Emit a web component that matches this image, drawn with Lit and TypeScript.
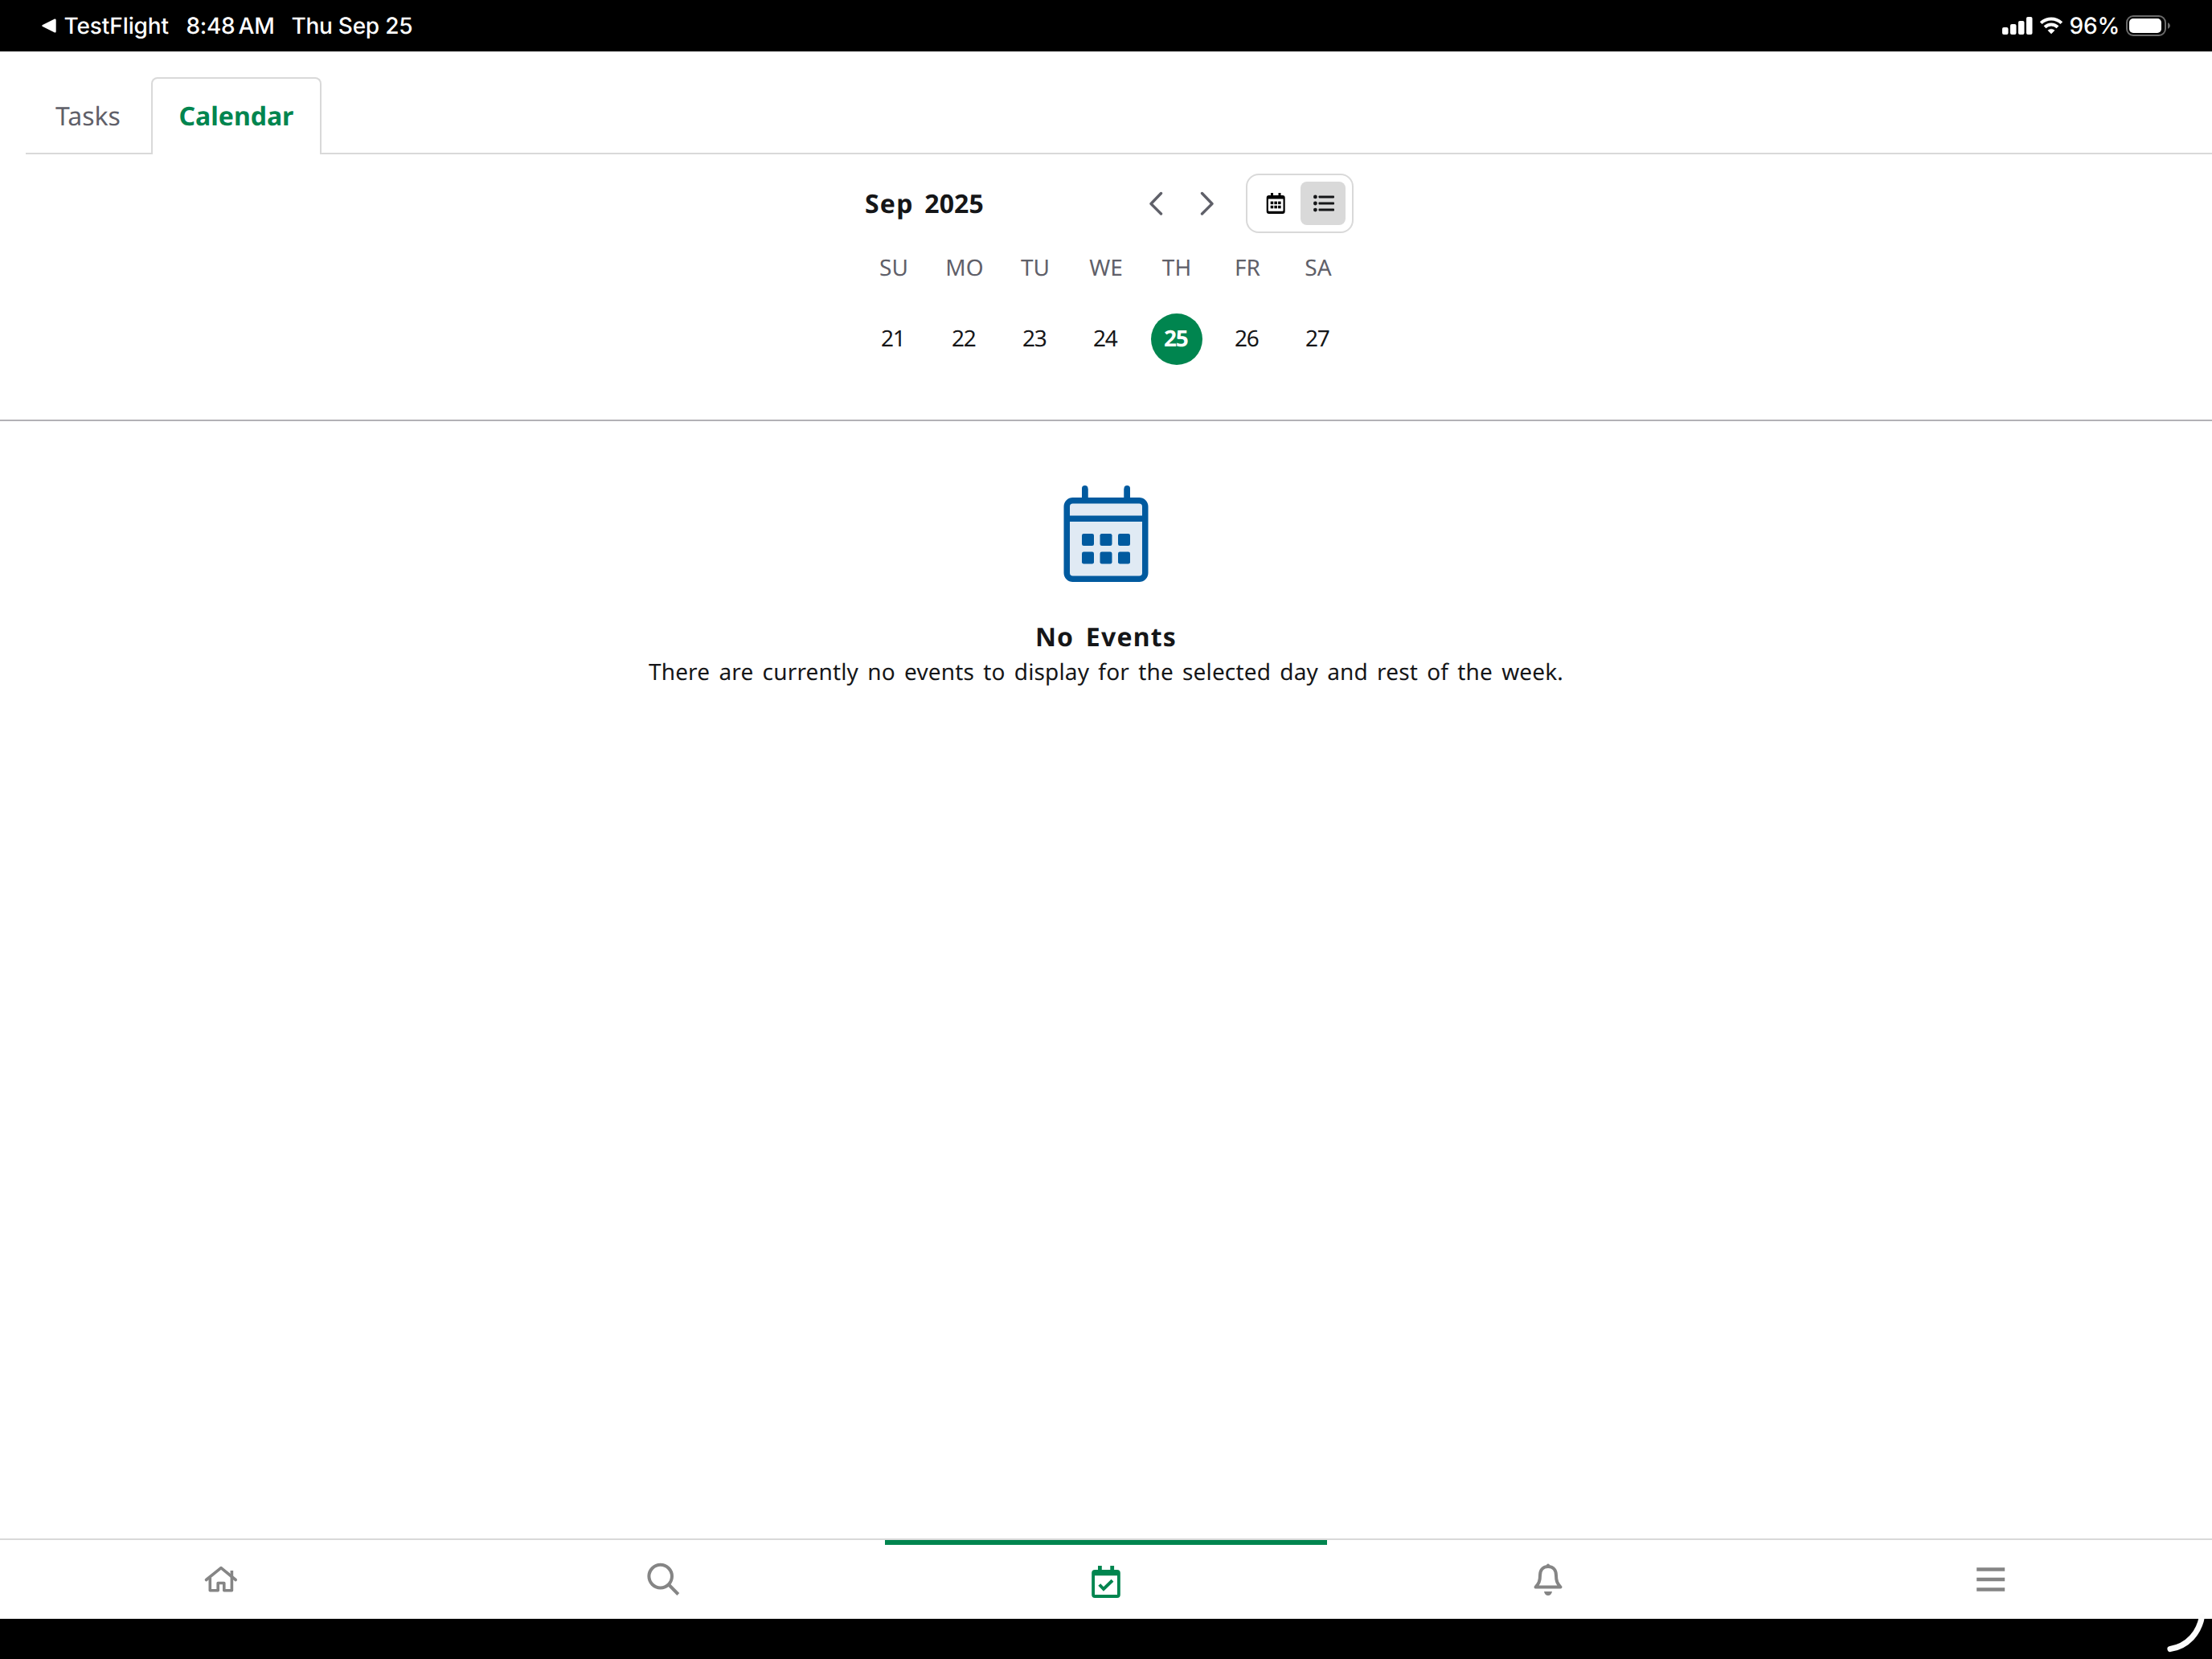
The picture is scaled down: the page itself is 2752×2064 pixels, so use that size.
import { LitElement, html, css, svg } from "lit";
import { customElement, property } from "lit/decorators.js";
import { classMap } from "lit/directives/class-map.js";

const NAV = ["home", "search", "calendar", "bell", "menu"];
const WEEK: [string, number][] = [["SU", 21], ["MO", 22], ["TU", 23], ["WE", 24], ["TH", 25], ["FR", 26], ["SA", 27]];

@customElement("status-bar")
class StatusBar extends LitElement {
  static styles = css`
    :host { display: flex; justify-content: space-between; height: 64px; background: #000; color: #fff;
      font: 500 28px/64px Inter, "Liberation Sans", sans-serif; box-sizing: border-box; padding: 0 51px 0 52px; white-space: pre; }
    .side { display: flex; align-items: center; }
    .back { width: 18px; height: 18px; margin-right: 9.500px; }
    .app { letter-spacing: -0.1px; }
    .time { margin-left: 21.500px; letter-spacing: -0.3px; word-spacing: -3px; }
    .date { margin-left: 21px; letter-spacing: -0.25px; }
    .signal { width: 38px; height: 22px; margin-right: 8px; }
    .wifi { width: 30px; height: 22px; margin-right: 8px; }
    .pct { letter-spacing: -0.2px; }
    .battery { width: 56px; height: 26px; margin-left: 8px; }
  `;
  render() {
    return html`
      <div class="side">
        <svg class="back" viewBox="0 0 18 18"><path d="M1 8 16 .5Q17.700 0 17.700 2V16Q17.700 18 16 17.500L1 10Q-.6 9 1 8Z" fill="#fff"/></svg>
        <span class="app">TestFlight</span><span class="time">8:48 AM</span><span class="date">Thu Sep 25</span>
      </div>
      <div class="side">
        <svg class="signal" viewBox="0 0 38 22" fill="#fff"><rect y="13" width="7.500" height="9" rx="2"/><rect x="10" y="9" width="7.500" height="13" rx="2"/><rect x="20" y="5" width="7.500" height="17" rx="2"/><rect x="30" width="7.500" height="22" rx="2"/></svg>
        <svg class="wifi" viewBox="0 0 30 22"><path d="M2.200 7.600A18.500 18.500 0 0 1 27.800 7.600" fill="none" stroke="#fff" stroke-width="4"/><path d="M7 12.700A11.500 11.500 0 0 1 23 12.700" fill="none" stroke="#fff" stroke-width="4"/><path d="M10.800 16.800Q15 13.600 19.200 16.800L15 21Z" fill="#fff" stroke="#fff" stroke-width=".5"/></svg>
        <span class="pct">96%</span>
        <svg class="battery" viewBox="0 0 56 26"><rect x="1" y="1" width="48" height="24" rx="8" fill="none" stroke="#6b6b6b" stroke-width="2"/><rect x="4" y="4" width="40" height="18" rx="5" fill="#fff"/><path d="M52 9Q55 10.500 55 13T52 17Z" fill="#6b6b6b"/></svg>
      </div>`;
  }
}

@customElement("tab-strip")
class TabStrip extends LitElement {
  static styles = css`
    :host { display: flex; align-items: flex-end; padding: 32px 0 0 32px; height: 128px; box-sizing: border-box; font-size: 32px; line-height: 98px; }
    .tab, .rest { box-sizing: border-box; height: 96px; border-bottom: 2px solid #d9d9d9; }
    .tab { width: 156px; padding-left: 37px; color: #5f6069; }
    .tab.active { width: 212px; padding: 0; text-align: center; border: 2px solid #d9d9d9; border-bottom: 0; border-radius: 8px 8px 0 0; color: #00854f; font-weight: 700; line-height: 94px; }
    .rest { flex: 1; }
  `;
  render() {
    return html`<div class="tab">Tasks</div><div class="tab active">Calendar</div><div class="rest"></div>`;
  }
}

@customElement("week-picker")
class WeekPicker extends LitElement {
  static styles = css`
    :host { display: block; border-bottom: 2px solid #b2b1b6; height: 332px; box-sizing: border-box; }
    .inner { width: 616px; margin: 0 auto; padding-top: 24px; }
    .head { display: flex; align-items: center; height: 74px; }
    .title { flex: 1; padding-left: 8px; font-size: 32px; line-height: 42px; padding-top: 1px; font-weight: 700; letter-spacing: 1.200px; word-spacing: 4.200px; white-space: nowrap; }
    .year { letter-spacing: .1px; }
    .arrow { width: 18px; height: 30px; margin-right: 46px; }
    .arrow.next { margin-right: 39px; }
    .toggle { box-sizing: border-box; width: 134px; height: 74px; border: 2px solid #d9d9d9; border-radius: 16px; display: flex; align-items: center; padding-left: 8px; }
    .opt { width: 56px; height: 54px; border-radius: 8px; display: flex; align-items: center; justify-content: center; margin-right: 2px; }
    .opt.on { background: #d9d9d9; }
    .opt svg { width: 28px; height: 28px; }
    .grid { display: grid; grid-template-columns: repeat(7, 88px); justify-items: center; font-size: 28px; }
    .dow { height: 88px; line-height: 87px; color: #5f6069; }
    .day { box-sizing: border-box; width: 64px; height: 64px; margin-top: 12px; padding-right: 2.400px; line-height: 62px; text-align: center; border-radius: 50%; letter-spacing: -1.200px; }
    .day.sel { background: #00854f; color: #fff; font-weight: 700; }
  `;
  @property({ type: Number }) selected = 25;
  render() {
    return html`<div class="inner">
      <div class="head">
        <div class="title">Sep <span class="year">2025</span></div>
        <svg class="arrow" viewBox="0 0 18 30"><path d="M15.500 2.500 3 15.500 15.500 28" fill="none" stroke="#5f6069" stroke-width="3.400" stroke-linecap="round" stroke-linejoin="round"/></svg>
        <svg class="arrow next" viewBox="0 0 18 30"><path d="M2.500 2.500 15 15.500 2.500 28" fill="none" stroke="#5f6069" stroke-width="3.400" stroke-linecap="round" stroke-linejoin="round"/></svg>
        <div class="toggle">
          <div class="opt"><svg viewBox="0 0 28 28"><path fill-rule="evenodd" d="M7 1h3v3h6.500V1h3v3h2.200q3 0 3 3v17q0 3-3 3H4.700q-3 0-3-3V7q0-3 3-3H7ZM3.900 8.400v14.400q0 1 1 1h16.600q1 0 1-1V8.400Z" fill="#000"/>${[6.7, 11.4, 16.1].map((x) => [11.6, 16.8].map((y) => svg`<rect x=${x} y=${y} width="3.500" height="3.500" fill="#000"/>`))}</svg></div>
          <div class="opt on"><svg viewBox="0 0 28 28" fill="#151618">${[5.9, 14, 22.1].map((y) => svg`<circle cx="4.400" cy=${y} r="2.400"/><rect x="8.500" y=${y - 1.5} width="19.500" height="3" rx=".8"/>`)}</svg></div>
        </div>
      </div>
      <div class="grid">
        ${WEEK.map(([n]) => html`<div class="dow">${n}</div>`)}
        ${WEEK.map(([, d]) => html`<div class=${classMap({ day: true, sel: d === this.selected })}>${d}</div>`)}
      </div>
    </div>`;
  }
}

@customElement("empty-state")
class EmptyState extends LitElement {
  static styles = css`
    :host { display: flex; flex-direction: column; align-items: center; flex: 1; padding-top: 80px; }
    .art { width: 120px; height: 120px; }
    .title { margin-top: 47px; font-size: 32px; line-height: 44px; font-weight: 700; letter-spacing: 1.200px; word-spacing: 5px; }
    .text { font-size: 28px; line-height: 42px; letter-spacing: .15px; word-spacing: 3.800px; }
  `;
  render() {
    return html`
      <svg class="art" viewBox="0 0 16 16">
        <rect x="1.500" y="2.500" width="13" height="13" rx="1" fill="#e0eaf4" stroke="#005a9f"/>
        <path d="M1.500 5.500h13M4.500 2V.5M11.500 2V.5" stroke="#005a9f"/>
        <path d="M4.500 2V.5M11.500 2V.5" stroke="#005a9f" stroke-linecap="round"/>
        ${[4, 7, 10].map((x) => [8, 11].map((y) => svg`<rect x=${x} y=${y} width="2" height="2" rx=".3" fill="#005a9f"/>`))}
      </svg>
      <div class="title">No Events</div>
      <div class="text">There are currently no events to display for the selected day and rest of the week.</div>`;
  }
}

@customElement("nav-bar")
class NavBar extends LitElement {
  static styles = css`
    :host { display: grid; grid-template-columns: repeat(5, 1fr); height: 100px; box-sizing: border-box; border-top: 2px solid #d9d9d9; }
    .item { display: flex; justify-content: center; box-sizing: border-box; padding-top: 28px; }
    .item.active { border-top: 6px solid #00854f; padding-top: 26px; }
    svg { width: 40px; height: 40px; fill: none; stroke: #858585; stroke-width: 4; }
  `;
  icon(name: string) {
    switch (name) {
      case "home": return svg`<path d="M1.600 21.500 20 6.700 38.200 21.500" stroke-width="3.600" stroke-linecap="round" stroke-linejoin="round"/><path d="M6.300 19V34.700H16.200V25.500H23.800V34.700H33.400V10" stroke-width="3.600" stroke-linejoin="round"/>`;
      case "search": return svg`<circle cx="15.700" cy="17.100" r="14.300"/><path d="M26 27.500 37.800 39.500"/>`;
      case "calendar": return svg`<path fill="#00854f" stroke="none" fill-rule="evenodd" d="M10 0h4.800v5h10.500V0h4.800v5h3.700q4 0 4 4v27q0 4-4 4H6.200q-4 0-4-4V9q0-4 4-4H10ZM6 12.300V36H34V12.300Z"/><path d="M11.800 23.500 17 29 28 18.300" stroke="#00854f"/>`;
      case "bell": return svg`<path d="M20 5c-7 0-10 5-10 11 0 7-1.500 10-5.500 14.500h31c-4-4.500-5.500-7.500-5.500-14.500 0-6-3-11-10-11ZM20 4.500V3.500" stroke-linejoin="round" stroke-linecap="round"/><path d="M15 36H25Q24 41 20 41T15 36Z" fill="#858585" stroke="none"/>`;
      default: return svg`<path d="M2.200 8.500h35M2.200 21h35M2.200 33.500h35" stroke-width="4.700"/>`;
    }
  }
  render() {
    return html`${NAV.map((n) => html`<div class=${classMap({ item: true, active: n === "calendar" })}><svg viewBox="0 0 40 40" overflow="visible">${this.icon(n)}</svg></div>`)}`;
  }
}

@customElement("app-root")
class AppRoot extends LitElement {
  static styles = css`
    :host { display: flex; flex-direction: column; position: relative; width: 2752px; height: 2064px; background: #fff; color: #151618; overflow: hidden; font-family: "Noto Sans", sans-serif; text-rendering: geometricPrecision; }
    .home { height: 50px; background: #000; }
    .corner { position: absolute; right: 0; bottom: 0; width: 72px; height: 64px; }
  `;
  render() {
    return html`<status-bar></status-bar><tab-strip></tab-strip><week-picker></week-picker><empty-state></empty-state><nav-bar></nav-bar><div class="home"></div>
      <svg class="corner" viewBox="0 0 72 64"><path d="M59.500 11C56 31 42 48 20 51.500" fill="none" stroke="#fcfcfc" stroke-width="7.200" stroke-linecap="round"/></svg>`;
  }
}
